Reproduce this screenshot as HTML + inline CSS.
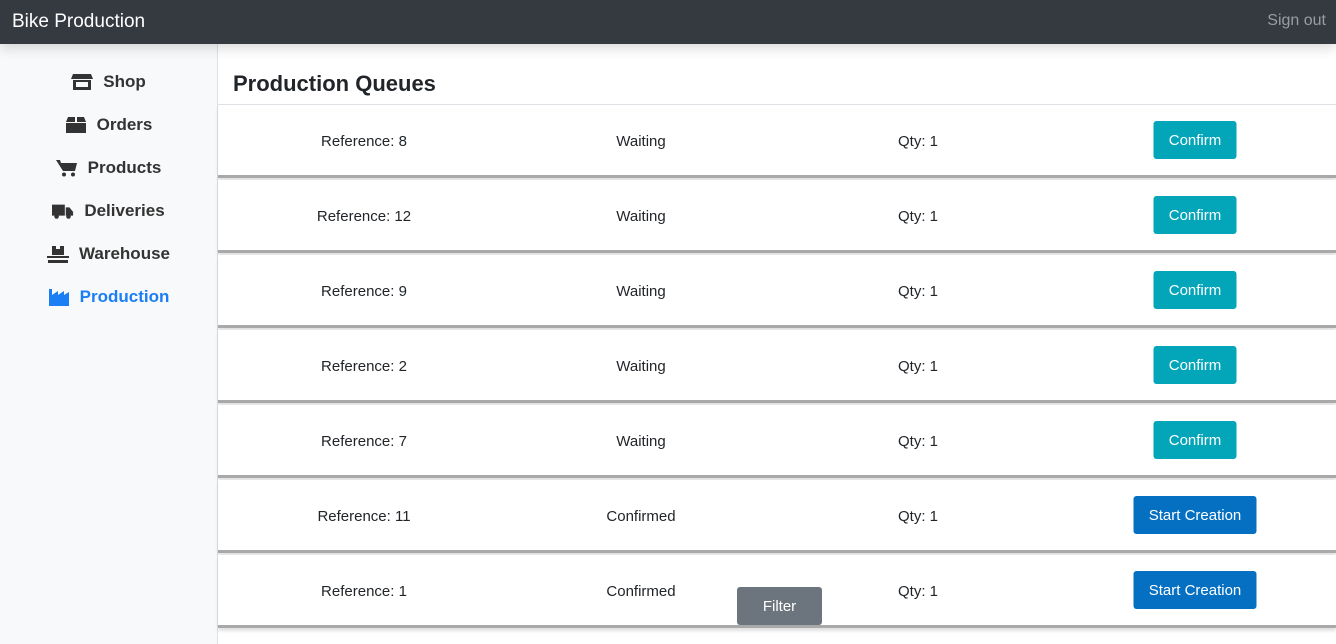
<!DOCTYPE html>
<html><head><style>
*{box-sizing:border-box;margin:0;padding:0}
body{width:1336px;height:644px;overflow:hidden;font-family:"Liberation Sans",sans-serif;background:#fff;position:relative;color:#212529}
.top{position:absolute;left:0;top:0;width:1336px;height:44px;background:#343a40;box-shadow:0 4px 12px rgba(0,0,0,.15);z-index:5}
.top .b{position:absolute;left:12px;top:11px;color:#fff;font-size:19px}
.top .s{position:absolute;right:10px;top:12px;color:#9a9da0;font-size:16px}
.side{position:absolute;left:0;top:44px;width:218px;height:600px;background:#f8f9fa;border-right:1px solid #dee2e6}
.nav{position:absolute;left:0;width:217px;display:flex;justify-content:center;align-items:center;font-size:17px;font-weight:bold;color:#333;gap:10px}
.nav svg{width:22px;height:18px}
.nav.a{color:#1a7ef5}
h2{position:absolute;left:233px;top:71px;font-size:22px;font-weight:bold;color:#212529}
.hl{position:absolute;left:218px;top:104px;width:1118px;height:1px;background:#dee2e6}
.row{position:absolute;left:218px;width:1118px;height:73px;background:#fff;border-bottom:3px solid #a9a9a9;box-shadow:0 3px 3px rgba(0,0,0,.12)}
.c{position:absolute;top:28px;font-size:15px;transform:translateX(-50%);white-space:nowrap}
.btn{position:absolute;top:16px;height:38px;border-radius:3px;color:#fff;font-size:15px;display:flex;align-items:center;justify-content:center;transform:translateX(-50%)}
.cf{background:#03a6b9;width:83px}
.sc{background:#0570c2;width:123px}
.filter{position:absolute;left:737px;top:587px;width:85px;height:38px;background:#6c757d;border-radius:3px;color:#fff;font-size:15px;display:flex;align-items:center;justify-content:center;z-index:4}
</style></head><body>
<div class="top"><span class="b">Bike Production</span><span class="s">Sign out</span></div>
<div class="side">
<div class="nav" style="top:28px"><svg viewBox="0 0 22 18"><path d="M2 1h18l2 5H0z M2 7h18v10H2z" fill="#333"/><rect x="5" y="9" width="12" height="5" fill="#f8f9fa"/></svg>Shop</div>
<div class="nav" style="top:71px"><svg viewBox="0 0 22 18"><path d="M3 1h7v5H1z M12 1h7l2 5h-9z M1 7h20v10H1z" fill="#333"/></svg>Orders</div>
<div class="nav" style="top:114px"><svg viewBox="0 0 22 18"><path d="M0 1h4l1 3h16l-2 8H7z" fill="#333"/><circle cx="8" cy="15.5" r="2" fill="#333"/><circle cx="17" cy="15.5" r="2" fill="#333"/></svg>Products</div>
<div class="nav" style="top:157px"><svg viewBox="0 0 24 18"><path d="M0 2h14v12H0z M15 5h4l4 5v4h-8z" fill="#333"/><circle cx="5" cy="15" r="2.5" fill="#333"/><circle cx="18" cy="15" r="2.5" fill="#333"/></svg>Deliveries</div>
<div class="nav" style="top:200px"><svg viewBox="0 0 22 18"><path d="M5 1h12v9H5z M0 11h22v2H0z M1 15h20v3H1z" fill="#333"/><rect x="9" y="1" width="4" height="3" fill="#f8f9fa"/></svg>Warehouse</div>
<div class="nav a" style="top:243px"><svg viewBox="0 0 22 18"><path d="M1 1h3v6l6-4v4l6-4v4l5-3v14H1z" fill="#1a7ef5"/></svg>Production</div>
</div>
<h2>Production Queues</h2>
<div class="hl"></div>

<div class="row" style="top:105px"><span class="c" style="left:146px">Reference: 8</span><span class="c" style="left:423px">Waiting</span><span class="c" style="left:700px">Qty: 1</span><span class="btn cf" style="left:977px">Confirm</span></div>
<div class="row" style="top:180px"><span class="c" style="left:146px">Reference: 12</span><span class="c" style="left:423px">Waiting</span><span class="c" style="left:700px">Qty: 1</span><span class="btn cf" style="left:977px">Confirm</span></div>
<div class="row" style="top:255px"><span class="c" style="left:146px">Reference: 9</span><span class="c" style="left:423px">Waiting</span><span class="c" style="left:700px">Qty: 1</span><span class="btn cf" style="left:977px">Confirm</span></div>
<div class="row" style="top:330px"><span class="c" style="left:146px">Reference: 2</span><span class="c" style="left:423px">Waiting</span><span class="c" style="left:700px">Qty: 1</span><span class="btn cf" style="left:977px">Confirm</span></div>
<div class="row" style="top:405px"><span class="c" style="left:146px">Reference: 7</span><span class="c" style="left:423px">Waiting</span><span class="c" style="left:700px">Qty: 1</span><span class="btn cf" style="left:977px">Confirm</span></div>
<div class="row" style="top:480px"><span class="c" style="left:146px">Reference: 11</span><span class="c" style="left:423px">Confirmed</span><span class="c" style="left:700px">Qty: 1</span><span class="btn sc" style="left:977px">Start Creation</span></div>
<div class="row" style="top:555px"><span class="c" style="left:146px">Reference: 1</span><span class="c" style="left:423px">Confirmed</span><span class="c" style="left:700px">Qty: 1</span><span class="btn sc" style="left:977px">Start Creation</span></div>
<div class="filter">Filter</div>
</body></html>
